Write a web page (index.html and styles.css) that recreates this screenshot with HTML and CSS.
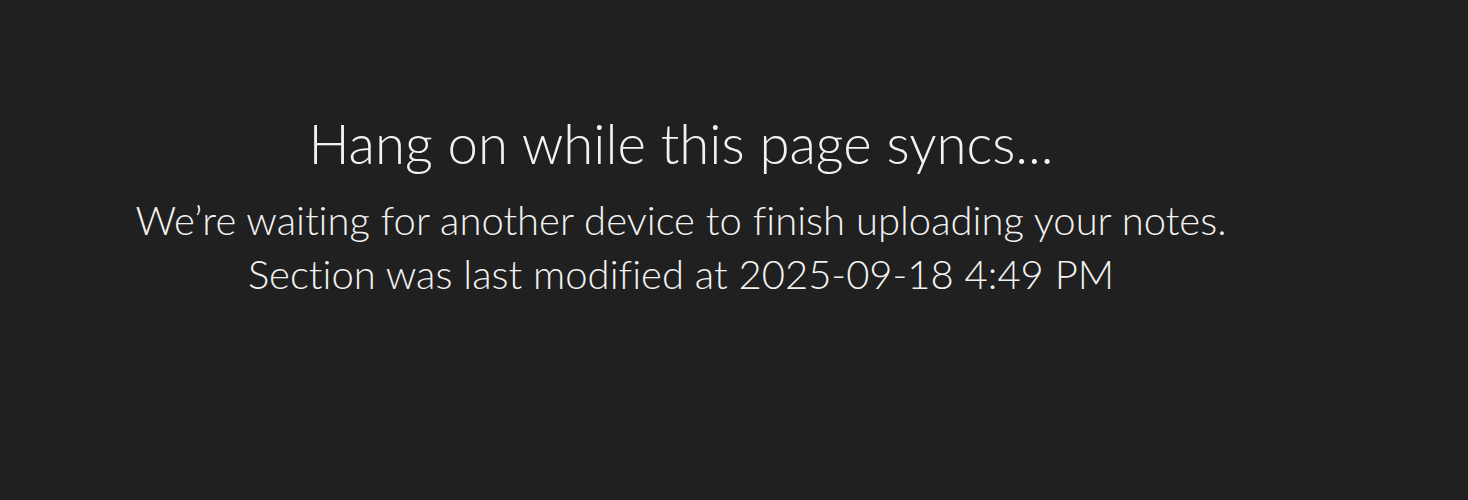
FILE: index.html
```html
<!DOCTYPE html>
<html lang="en">
<head>
<meta charset="utf-8">
<title>Sync</title>
<link rel="stylesheet" href="styles.css">
</head>
<body>
<main class="pane">
  <div class="message">
    <h1 class="title">Hang on while this page syncs...</h1>
    <p class="detail">We’re waiting for another device to finish uploading your notes.</p>
    <p class="detail">Section was last modified at 2025-09-18 4:49 PM</p>
  </div>
</main>
</body>
</html>
```
FILE: styles.css
```css
html, body {
  margin: 0;
  padding: 0;
  background: #202020;
}
body {
  width: 1468px;
  height: 500px;
  overflow: hidden;
  font-family: "Lato", "Open Sans", sans-serif;
  font-weight: 300;
  color: #f2f2f2;
  font-variant-ligatures: none;
}
.pane {
  width: 1362px;
  padding-top: 107px;
}
.message {
  text-align: center;
}
.title {
  margin: 0 0 14px;
  font-size: 54.5px;
  font-weight: 300;
  line-height: 72px;
}
.detail {
  margin: 0;
  font-size: 40px;
  line-height: 54px;
}
```
